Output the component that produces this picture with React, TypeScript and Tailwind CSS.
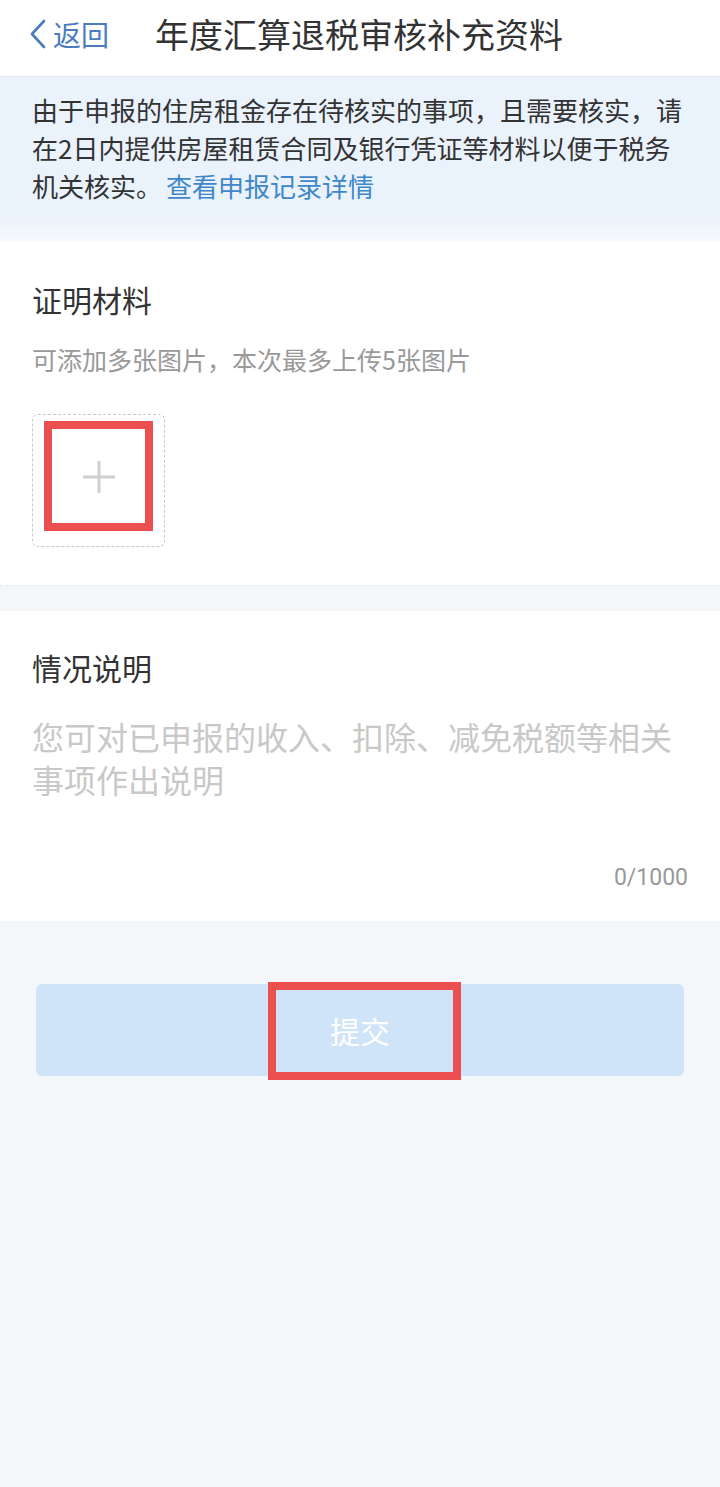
const font = { fontFamily: '"Noto Sans CJK SC", "Noto Sans", sans-serif' }

export default function App() {
  return (
    <div className="min-h-[1487px] w-[720px] bg-[#f4f7fa]" style={font}>
      <Header />
      <Notice />
      <ProofSection />
      <div className="h-[25px] bg-[#f5f6f8]" />
      <DescSection />
      <SubmitBar />
    </div>
  )
}

const Header = () => {
  return (
    <header className="flex h-[77px] items-center border-b border-[#e3e7ec] bg-white pb-[8px]">
      <a className="flex items-center pl-[29px] text-[#4a7cbf]">
        <svg width="18" height="30" viewBox="0 0 18 30" fill="none">
          <path d="M15 2 L3 15 L15 28" stroke="currentColor" strokeWidth="2.6" strokeLinecap="round" strokeLinejoin="round" />
        </svg>
        <span className="ml-[6px] text-[28px] leading-none">返回</span>
      </a>
      <h1 className="ml-[46px] text-[34px] font-normal leading-none text-[#333]">年度汇算退税审核补充资料</h1>
    </header>
  )
}

const Notice = () => {
  return (
    <section>
      <div className="bg-[#eaf2fc] px-[32px] pt-[14px] pb-[10px] text-[26px] leading-[38px] text-[#333]">
        由于申报的住房租金存在待核实的事项，且需要核实，请在2日内提供房屋租赁合同及银行凭证等材料以便于税务机关核实。
        <span className="ml-[4px] text-[#3f87c9]">查看申报记录详情</span>
      </div>
      <div className="h-[26px] bg-gradient-to-b from-[#eaf2fc] to-[#f6f9fc]" />
    </section>
  )
}

const ProofSection = () => {
  return (
    <section className="border-b border-dotted border-[#dcdfe4] bg-white px-[32px] pt-[38px] pb-[38px]">
      <h2 className="text-[30px] leading-[40px] text-[#333]">证明材料</h2>
      <p className="mt-[22px] text-[25px] leading-[36px] text-[#999]">可添加多张图片，本次最多上传5张图片</p>
      <div className="relative mt-[37px] flex h-[133px] w-[133px] items-center justify-center rounded-md border border-dashed border-[#c8c8c8] pb-[8px]">
        <svg width="34" height="34" viewBox="0 0 34 34">
          <path d="M17 1 V33 M1 17 H33" stroke="#d0d0d0" strokeWidth="3" />
        </svg>
        <div className="absolute top-[6px] left-[11px] h-[110px] w-[109px] border-[8px] border-[#ec4f4f]" />
      </div>
    </section>
  )
}

const DescSection = () => {
  return (
    <section className="bg-white px-[32px] pt-[36px] pb-[28px]">
      <h2 className="text-[30px] leading-[40px] text-[#333]">情况说明</h2>
      <p className="mt-[28px] text-[32px] leading-[43px] text-[#c8c8c8]">
        您可对已申报的收入、扣除、减免税额等相关事项作出说明
      </p>
      <div className="mt-[62px] text-right text-[23px] leading-[30px] text-[#999]" style={{ fontFamily: 'Roboto, "Noto Sans", sans-serif' }}>
        0/1000
      </div>
    </section>
  )
}

const SubmitBar = () => {
  return (
    <div className="bg-gradient-to-b from-[#f5f6f8] to-[#f4f7fa] px-[36px] pt-[63px]">
      <button className="relative flex h-[92px] w-full items-center justify-center rounded-md bg-[#cfe4f9] text-[30px] text-white">
        提交
        <span className="absolute top-[-2px] left-[232px] h-[98px] w-[193px] border-[8px] border-[#ec4f4f]" />
      </button>
    </div>
  )
}
